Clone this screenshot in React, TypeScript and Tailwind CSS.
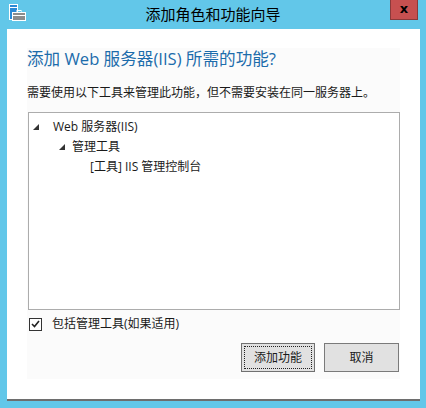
import React from "react";

const font = "font-['Open_Sans','Noto_Sans_CJK_SC',sans-serif]";

function ExpandArrow() {
  return (
    <svg width="6" height="6" viewBox="0 0 6 6" className="shrink-0">
      <polygon points="6,0 6,6 0,6" fill="#333333" />
    </svg>
  );
}

function AppIcon() {
  return (
    <svg width="19" height="18" viewBox="0 0 19 18">
      {/* server */}
      <rect x="1.5" y="0.5" width="8" height="15" fill="#2a8ad6" stroke="#ffffff" />
      <line x1="2" y1="3.5" x2="9" y2="3.5" stroke="#ffffff" />
      {/* briefcase */}
      <rect x="4.5" y="8.5" width="13" height="8" fill="#8c8c8c" stroke="#ffffff" />
      <rect x="9" y="6.5" width="4" height="2" fill="none" stroke="#ffffff" />
      <line x1="5" y1="11.5" x2="17" y2="11.5" stroke="#ffffff" />
    </svg>
  );
}

export default function App() {
  return (
    <div className={`w-[426px] h-[408px] bg-[#62c7e9] flex flex-col ${font}`}>
      {/* Title bar */}
      <div className="relative h-[29px] shrink-0 flex items-center">
        <div className="ml-[8px] mt-[-3px]">
          <AppIcon />
        </div>
        <div className="absolute left-0 right-0 top-[4px] text-center text-[15px] leading-[20px] text-black">
          添加角色和功能向导
        </div>
        <div className="absolute left-[390px] top-0 w-[28px] h-[20px] bg-[#c75050] border border-[#8a3a3a] border-t-0 flex items-center justify-center">
          <span className="text-[13px] font-bold leading-none text-black mt-[-2px] font-['DejaVu_Sans',sans-serif]">x</span>
        </div>
      </div>

      {/* Window body */}
      <div className="ml-[7px] w-[413px] bg-white border-b-2 border-[#6e6e6e] pt-[19px] px-[20px] pb-[20px]">
        <div className="bg-[#fbfbfb] flex flex-col">
          <h1 className="h-[22px] text-[16.6px] leading-[22px] text-[#1c6cab] whitespace-nowrap">
            添加 Web 服务器(IIS) 所需的功能?
          </h1>
          <p className="mt-[15px] text-[12px] leading-[16px] text-[#1a1a1a] whitespace-nowrap">
            需要使用以下工具来管理此功能，但不需要安装在同一服务器上。
          </p>

          {/* Tree */}
          <div className="mt-[11px] ml-[1px] h-[198px] bg-white border border-[#acacac] pt-[4px] text-[12px] text-[#1a1a1a]">
            <div className="h-[20px] flex items-center pl-[4px]">
              <ExpandArrow />
              <span className="ml-[14px]">Web 服务器(IIS)</span>
            </div>
            <div className="h-[20px] flex items-center pl-[30px]">
              <ExpandArrow />
              <span className="ml-[7px]">管理工具</span>
            </div>
            <div className="h-[20px] flex items-center pl-[61px]">
              <span>[工具] IIS 管理控制台</span>
            </div>
          </div>

          {/* Checkbox */}
          <div className="mt-[6px] h-[16px] flex items-center pl-[2px]">
            <div className="w-[13px] h-[13px] border border-[#333333] bg-white flex items-center justify-center">
              <svg width="9" height="8" viewBox="0 0 9 8">
                <polyline points="1,4 3.5,6.5 8,1" fill="none" stroke="#222222" strokeWidth="1.6" />
              </svg>
            </div>
            <span className="ml-[10px] text-[12px] leading-[16px] text-[#1a1a1a]">包括管理工具(如果适用)</span>
          </div>

          {/* Buttons */}
          <div className="mt-[11px] pb-[7px] pr-[1px] flex justify-end gap-[9px]">
            <button className="relative w-[74px] h-[29px] bg-[#e1e1e1] border border-[#707070] text-[12px] text-[#1a1a1a]">
              <span className="absolute inset-[2px] border border-dotted border-[#222222]" />
              添加功能
            </button>
            <button className="w-[75px] h-[29px] bg-[#e1e1e1] border border-[#7a7a7a] text-[12px] text-[#1a1a1a]">
              取消
            </button>
          </div>
        </div>
      </div>
    </div>
  );
}
